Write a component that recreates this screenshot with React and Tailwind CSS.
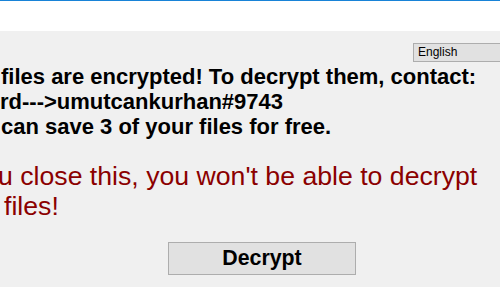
import React from 'react';

export default function App() {
  return (
    <div className="w-[500px] h-[287px] overflow-hidden bg-[#f0f0f0] font-['Liberation_Sans',Arial,sans-serif]">
      <div className="h-[31px] bg-white border-t border-[#1883d7]" />

      <div className="pt-[12px]">
        <div className="flex justify-end">
          <div className="w-[100px] h-[19px] -mr-[13px] border border-[#adadad] bg-[#e1e1e1] pl-[4px] text-[12px] leading-[17px] text-black">
            English
          </div>
        </div>

        <div className="mt-[2px] text-[22px] leading-[25px] font-bold text-black whitespace-nowrap">
          <div className="pl-[1px]">files are encrypted! To decrypt them, contact:</div>
          <div>rd---&gt;umutcankurhan#9743</div>
          <div className="pl-[1px]">can save 3 of your files for free.</div>
        </div>

        <div className="mt-[22px] text-[26.67px] leading-[30px] text-[#8b0000] whitespace-nowrap">
          <div className="-ml-[2px]">u close this, you won't be able to decrypt</div>
          <div className="pl-[4px]">files!</div>
        </div>

        <button className="mt-[21px] ml-[168px] w-[188px] h-[33px] flex items-center justify-center border border-[#adadad] bg-[#e1e1e1] text-[21.33px] font-bold text-black">
          Decrypt
        </button>
      </div>
    </div>
  );
}
